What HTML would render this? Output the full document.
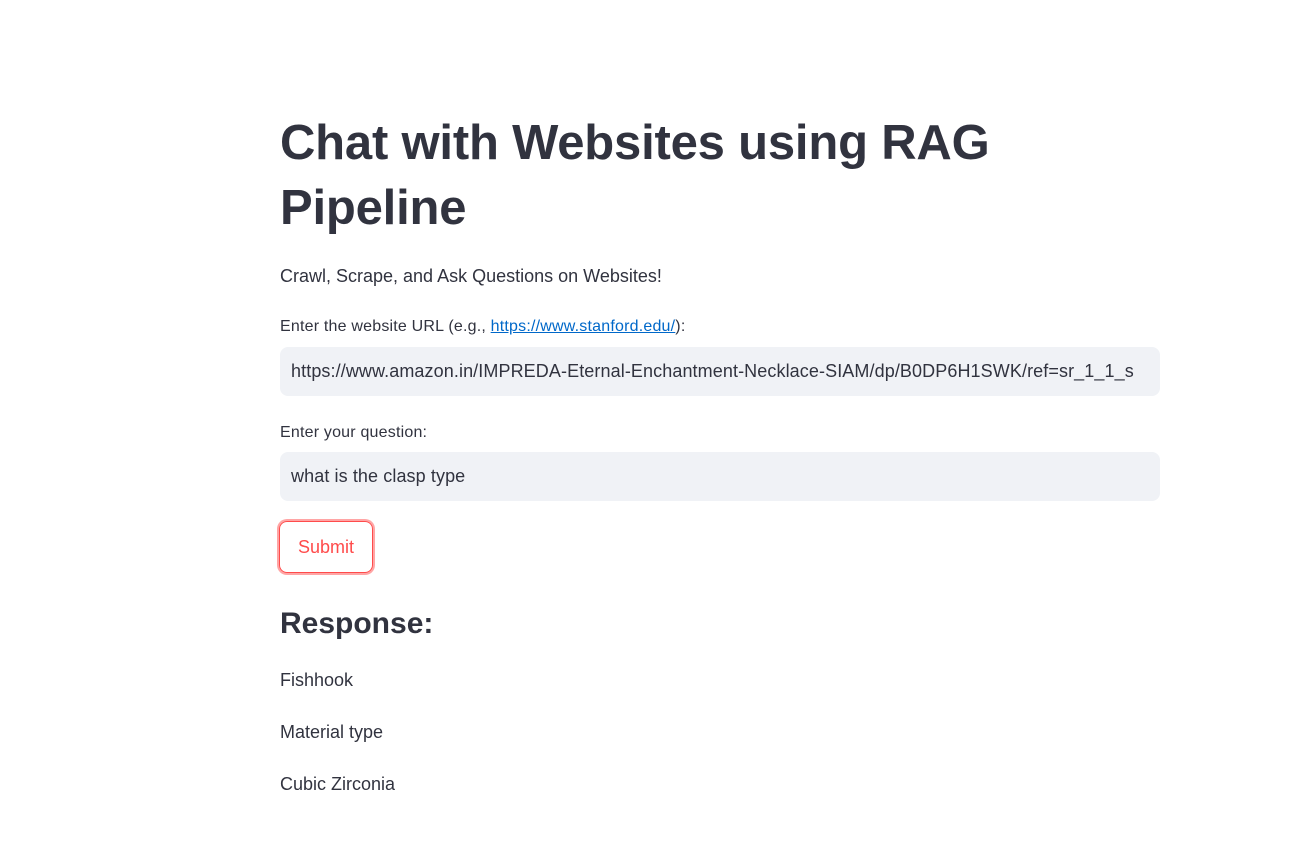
<!DOCTYPE html>
<html><head><meta charset="utf-8"><style>
body{margin:0;background:#fff;width:1313px;height:847px;overflow:hidden;font-family:"Liberation Sans",sans-serif;color:#31333f;position:relative}
.a{position:absolute;left:280px;white-space:nowrap}
h1{margin:0;font-size:49px;font-weight:bold;line-height:65px;letter-spacing:-0.2px}
.inp{position:absolute;left:280px;width:880px;height:49px;background:#f0f2f6;border-radius:8px;overflow:hidden;white-space:nowrap;font-size:18px;line-height:49px;padding-left:11px;box-sizing:border-box;letter-spacing:0.1px}
.lbl{font-size:16px;letter-spacing:0.2px}
a{color:#0068c9}
</style></head><body>
<div class="a" style="top:111px"><h1>Chat with Websites using RAG<br>Pipeline</h1></div>
<div class="a" style="top:266px;font-size:18px">Crawl, Scrape, and Ask Questions on Websites!</div>
<div class="a lbl" style="top:318px">Enter the website URL (e.g., <a href="#">https://www.stanford.edu/</a>):</div>
<div class="inp" style="top:347px">https://www.amazon.in/IMPREDA-Eternal-Enchantment-Necklace-SIAM/dp/B0DP6H1SWK/ref=sr_1_1_s</div>
<div class="a lbl" style="top:424px">Enter your question:</div>
<div class="inp" style="top:452px">what is the clasp type</div>
<div style="position:absolute;left:279px;top:521px;width:94px;height:52px;box-sizing:border-box;border:1px solid #ff4b4b;border-radius:8px;box-shadow:0 0 0 2px rgba(255,75,75,0.5);color:#ff4b4b;font-size:18px;line-height:50px;text-align:center">Submit</div>
<div class="a" style="top:607px;font-size:30px;font-weight:bold">Response:</div>
<div class="a" style="top:670px;font-size:18px">Fishhook</div>
<div class="a" style="top:722px;font-size:18px">Material type</div>
<div class="a" style="top:774px;font-size:18px">Cubic Zirconia</div>
</body></html>
